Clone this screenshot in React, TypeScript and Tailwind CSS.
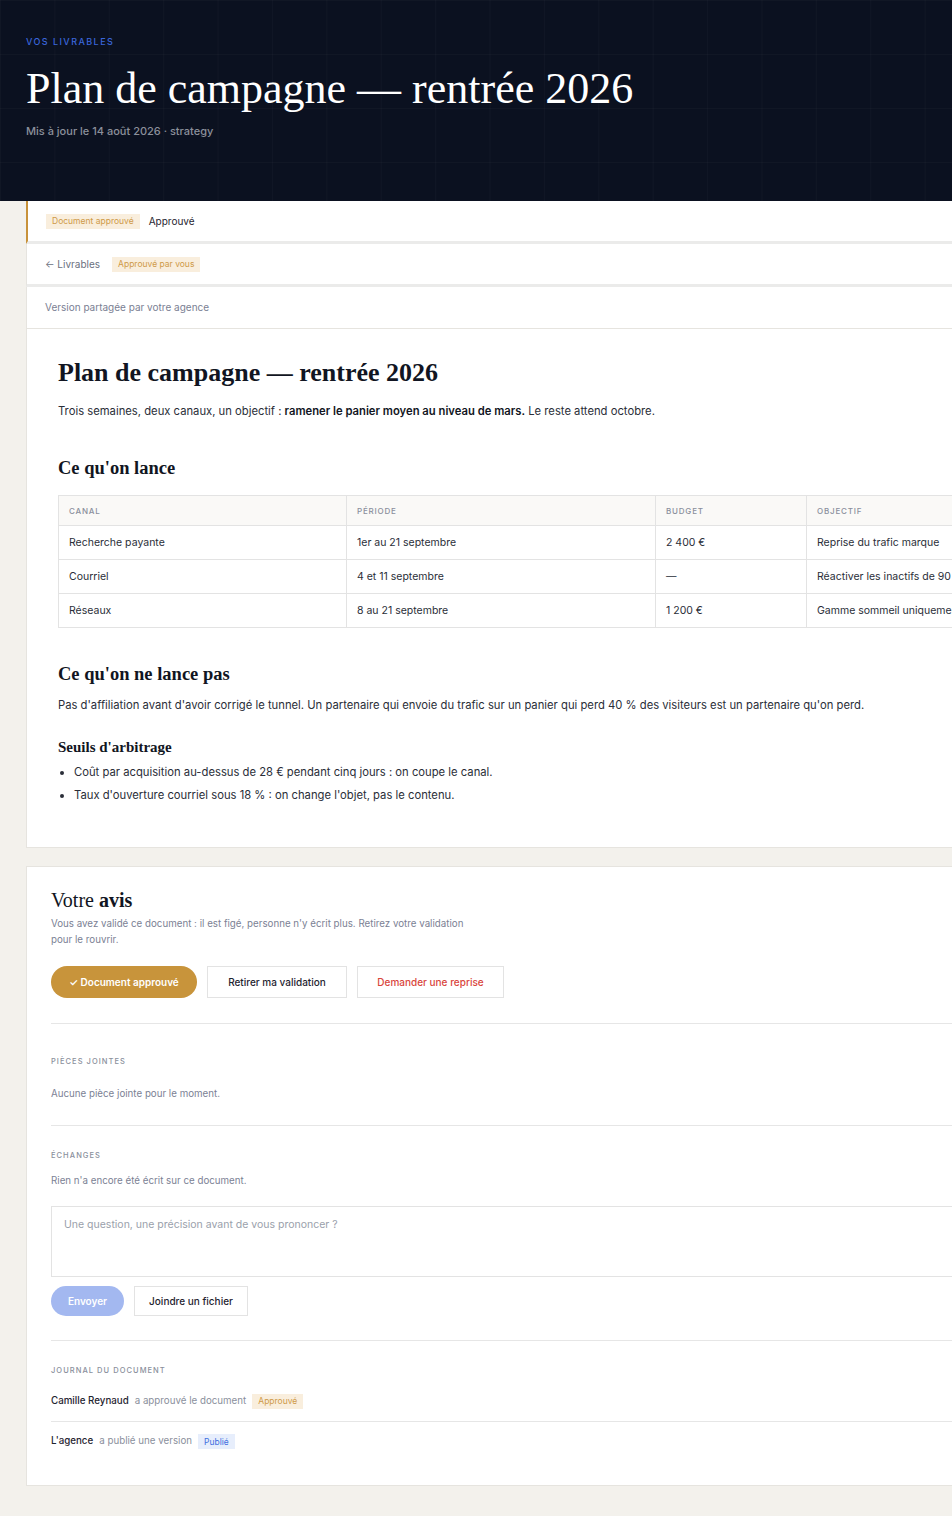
import { ReactNode } from "react";

const sans = "font-['Inter','Noto_Sans',sans-serif]";
const serif = "font-['Liberation_Serif','DejaVu_Serif',serif]";

const rows = [
  { canal: "Recherche payante", periode: "1er au 21 septembre", budget: "2 400 €", objectif: "Reprise du trafic marque" },
  { canal: "Courriel", periode: "4 et 11 septembre", budget: "—", objectif: "Réactiver les inactifs de 90 jours" },
  { canal: "Réseaux", periode: "8 au 21 septembre", budget: "1 200 €", objectif: "Gamme sommeil uniquement" },
];

function Tag({ tone, children }: { tone: "gold" | "blue"; children: ReactNode }) {
  const colors =
    tone === "gold" ? "bg-[#f9eedd] text-[#cf9a48]" : "bg-[#e7eefc] text-[#3f6fe0]";
  return (
    <span className={`inline-flex items-center h-[15px] px-[6px] text-[8.5px] leading-none ${colors}`}>
      {children}
    </span>
  );
}

function Label({ children }: { children: ReactNode }) {
  return (
    <p className="text-[7.5px] leading-[10px] font-medium uppercase tracking-[0.14em] text-[#8a8f9c]">{children}</p>
  );
}

export default function App() {
  return (
    <div className={`min-h-[1516px] w-full overflow-hidden bg-[#f3f1ec] ${sans}`}>
      <header className="h-[201px] bg-[#0b1120] bg-[linear-gradient(rgba(255,255,255,0.025)_1px,transparent_1px),linear-gradient(90deg,rgba(255,255,255,0.025)_1px,transparent_1px)] bg-[size:54.4px_54px] px-[26px] pt-[36px]">
        <p className="text-[9px] font-medium leading-[12px] tracking-[0.16em] text-[#3a66db]">VOS LIVRABLES</p>
        <h1 className={`mt-[15px] text-[44px] leading-[52px] text-white ${serif}`}>
          Plan de campagne — rentrée 2026
        </h1>
        <p className="mt-[8px] text-[11px] font-medium text-[#8b909b]">
          Mis à jour le 14 août 2026 · strategy
        </p>
      </header>

      <main className="pl-[26px] pb-[28px]">
        <div className="w-[1140px]">
          <div className="flex h-[43px] items-center gap-[9px] border-b-[3px] border-l-2 border-b-[#ebebea] border-l-[#c8923a] bg-white pl-[18px]">
            <Tag tone="gold">Document approuvé</Tag>
            <span className="text-[10px] text-[#1f2430]">Approuvé</span>
          </div>

          <div className="flex h-[43px] items-center gap-[12px] border-b-[3px] border-l border-b-[#ebebea] border-l-[#e6e4df] bg-white pl-[18px]">
            <span className="text-[10px] text-[#6b7180]">← Livrables</span>
            <Tag tone="gold">Approuvé par vous</Tag>
          </div>

          <div className="flex h-[42px] items-center border-b border-l border-[#e6e4df] bg-white pl-[18px]">
            <span className="text-[10px] text-[#7a8093]">Version partagée par votre agence</span>
          </div>

          <article className="border-b border-l border-[#e6e4df] bg-white px-[31px] pt-[28px] pb-[43px] text-[#2a2e38]">
            <h2 className={`text-[26px] font-bold leading-[32px] text-[#111522] ${serif}`}>
              Plan de campagne — rentrée 2026
            </h2>
            <p className="mt-[13px] text-[11.25px] leading-[18px]">
              Trois semaines, deux canaux, un objectif :{" "}
              <strong className="font-semibold text-[#111522]">ramener le panier moyen au niveau de mars.</strong> Le
              reste attend octobre.
            </p>

            <h3 className={`mt-[36px] text-[18.5px] font-semibold leading-[24px] text-[#111522] ${serif}`}>
              Ce qu'on lance
            </h3>
            <table className="mt-[15px] w-full border-collapse border border-[#e3e3e3] text-left text-[10.5px] text-[#2a2e38]">
              <thead className="bg-[#faf9f7]">
                <tr className="h-[30px]">
                  <th className="w-[288px] border border-[#e3e3e3] px-[10px] text-[8px] font-medium tracking-[0.1em] text-[#8a8f9c]">CANAL</th>
                  <th className="w-[309px] border border-[#e3e3e3] px-[10px] text-[8px] font-medium tracking-[0.1em] text-[#8a8f9c]">PÉRIODE</th>
                  <th className="w-[151px] border border-[#e3e3e3] px-[10px] text-[8px] font-medium tracking-[0.1em] text-[#8a8f9c]">BUDGET</th>
                  <th className="border border-[#e3e3e3] px-[10px] text-[8px] font-medium tracking-[0.1em] text-[#8a8f9c]">OBJECTIF</th>
                </tr>
              </thead>
              <tbody>
                {rows.map((r) => (
                  <tr key={r.canal} className="h-[34px]">
                    <td className="border border-[#e3e3e3] px-[10px]">{r.canal}</td>
                    <td className="border border-[#e3e3e3] px-[10px]">{r.periode}</td>
                    <td className="border border-[#e3e3e3] px-[10px]">{r.budget}</td>
                    <td className="whitespace-nowrap border border-[#e3e3e3] px-[10px]">{r.objectif}</td>
                  </tr>
                ))}
              </tbody>
            </table>

            <h3 className={`mt-[34px] text-[18.5px] font-semibold leading-[24px] text-[#111522] ${serif}`}>
              Ce qu'on ne lance pas
            </h3>
            <p className="mt-[10px] text-[11.25px] leading-[18px]">
              Pas d'affiliation avant d'avoir corrigé le tunnel. Un partenaire qui envoie du trafic sur un panier qui
              perd 40 % des visiteurs est un partenaire qu'on perd.
            </p>

            <h4 className={`mt-[23px] text-[15px] font-semibold leading-[20px] text-[#111522] ${serif}`}>
              Seuils d'arbitrage
            </h4>
            <ul className="mt-[6px] list-disc space-y-[5px] pl-[16px] text-[11.25px] leading-[18px]">
              <li>Coût par acquisition au-dessus de 28 € pendant cinq jours : on coupe le canal.</li>
              <li>Taux d'ouverture courriel sous 18 % : on change l'objet, pas le contenu.</li>
            </ul>
          </article>

          <section className="mt-[18px] border border-r-0 border-[#e6e4df] bg-white px-[24px] pt-[21px] pb-[24px]">
            <h2 className={`text-[20px] leading-[24px] text-[#111522] ${serif}`}>
              Votre <span className="font-bold">avis</span>
            </h2>
            <p className="mt-[4px] max-w-[425px] text-[9.75px] leading-[16px] text-[#7b8194]">
              Vous avez validé ce document : il est figé, personne n'y écrit plus. Retirez votre validation pour le
              rouvrir.
            </p>
            <div className="mt-[18px] flex gap-[10px]">
              <button className="h-[32px] w-[146px] rounded-full bg-[#c8943b] text-[10px] font-semibold text-white">
                ✓ Document approuvé
              </button>
              <button className="h-[32px] w-[140px] border border-[#e3e3e3] bg-white text-[10px] font-medium text-[#1f2430]">
                Retirer ma validation
              </button>
              <button className="h-[32px] w-[147px] border border-[#e3e3e3] bg-white text-[10px] font-medium text-[#d9453c]">
                Demander une reprise
              </button>
            </div>

            <div className="mt-[25px] border-t border-[#e6e6e6] pt-[33px] pb-[23px]">
              <Label>Pièces jointes</Label>
              <p className="mt-[20px] text-[9.75px] text-[#7b8194]">Aucune pièce jointe pour le moment.</p>
            </div>

            <div className="border-t border-[#e6e6e6] pt-[25px] pb-[24px]">
              <Label>Échanges</Label>
              <p className="mt-[13px] text-[9.75px] text-[#7b8194]">Rien n'a encore été écrit sur ce document.</p>
              <textarea
                className="mt-[18px] block h-[71px] w-full resize-none border border-[#e3e3e3] px-[12px] py-[10px] text-[10.5px] outline-none placeholder:text-[#9a9fab]"
                placeholder="Une question, une précision avant de vous prononcer ?"
              />
              <div className="mt-[9px] flex gap-[10px]">
                <button className="h-[30px] w-[73px] rounded-full bg-[#a3b8f0] text-[10px] font-semibold text-white">
                  Envoyer
                </button>
                <button className="h-[30px] w-[114px] border border-[#e3e3e3] bg-white text-[10px] font-medium text-[#1f2430]">
                  Joindre un fichier
                </button>
              </div>
            </div>

            <div className="border-t border-[#e6e6e6] pt-[25px]">
              <Label>Journal du document</Label>
              <div className="mt-[5px] flex h-[41px] items-center gap-[6px] border-b border-[#e6e6e6] text-[9.75px]">
                <span className="font-medium text-[#1f2430]">Camille Reynaud</span>
                <span className="text-[#8a8f9c]">a approuvé le document</span>
                <Tag tone="gold">Approuvé</Tag>
              </div>
              <div className="flex h-[39px] items-center gap-[6px] text-[9.75px]">
                <span className="font-medium text-[#1f2430]">L'agence</span>
                <span className="text-[#8a8f9c]">a publié une version</span>
                <Tag tone="blue">Publié</Tag>
              </div>
            </div>
          </section>
        </div>
      </main>
    </div>
  );
}
